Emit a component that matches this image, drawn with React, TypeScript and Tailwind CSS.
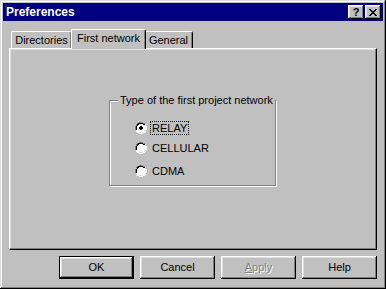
import React from 'react';

const font = "font-['Liberation_Sans',Arial,sans-serif]";

const bevelOut =
  'shadow-[inset_-1px_-1px_#000,inset_1px_1px_#fff,inset_-2px_-2px_#808080,inset_2px_2px_#dfdfdf]';

const TitleButton: React.FC<{ children: React.ReactNode }> = ({ children }) => (
  <div
    className={`w-[16px] h-[14px] bg-[#c0c0c0] ${bevelOut} flex items-center justify-center text-black font-bold text-[11px] leading-none`}
  >
    {children}
  </div>
);

const Radio: React.FC<{ label: string; checked?: boolean; focused?: boolean; className?: string }> = ({
  label,
  checked,
  focused,
  className = '',
}) => (
  <div className={`flex items-center h-[14px] ${className}`}>
    <svg width="12" height="12" viewBox="0 0 12 12" className="shrink-0">
      <path d="M4 0h4v1h2v1h1v2h1v4h-1v2h-1v1h-2v1h-4v-1h-2v-1h-1v-2h-1v-4h1v-2h1v-1h2z" fill="#fff" />
      <path d="M4 0h4v1h2v1h-2v-1h-4v1h-2v2h-1v4h-1v-4h1v-2h1v-1h2z" fill="#808080" />
      <path d="M4 1h4v1h2v1h-2v-1h-4v1h-1v1h-1v4h-1v-4h1v-2h1v-1h1z" fill="#000" />
      <path d="M4 2h4v1h1v1h1v4h-1v1h-1v1h-4v-1h-1v-1h-1v-4h1v-1h1z" fill="#fff" />
      <path d="M10 2h1v2h-1zM10 8h1v1h-1v1h-1v-1h1zM4 10h4v1h-4z" fill="#dfdfdf" />
      {checked && <path d="M5 4h2v1h1v2h-1v1h-2v-1h-1v-2h1z" fill="#000" />}
    </svg>
    <span
      className={`ml-[4px] px-[1px] text-[11px] leading-[12px] text-black ${
        focused ? 'outline outline-1 outline-dotted outline-black' : ''
      }`}
    >
      {label}
    </span>
  </div>
);

const Button: React.FC<{ children: React.ReactNode; isDefault?: boolean }> = ({ children, isDefault }) => (
  <div
    className={`w-[75px] h-[23px] bg-[#c0c0c0] flex items-center justify-center text-[11px] text-black ${
      isDefault ? `border border-black ${bevelOut}` : bevelOut
    }`}
  >
    {children}
  </div>
);

export default function App() {
  return (
    <div
      className={`w-[386px] h-[289px] bg-[#c0c0c0] p-[3px] flex flex-col ${font} shadow-[inset_-1px_-1px_#000,inset_1px_1px_#dfdfdf,inset_-2px_-2px_#808080,inset_2px_2px_#fff]`}
    >
      {/* title bar */}
      <div className="h-[18px] bg-[#000080] flex items-center pl-[3px] pr-[2px] shrink-0">
        <span className="text-white font-bold text-[12px] leading-none">Preferences</span>
        <div className="ml-auto flex">
          <TitleButton>?</TitleButton>
          <div className="w-[1px]" />
          <TitleButton>
            <svg width="8" height="7" viewBox="0 0 8 7">
              <path d="M0 0h2v1h1v1h2v-1h1v-1h2v1h-1v1h-1v1h-1v1h1v1h1v1h1v1h-2v-1h-1v-1h-2v1h-1v1h-2v-1h1v-1h1v-1h1v-1h-1v-1h-1v-1h-1z" fill="#000" />
            </svg>
          </TitleButton>
        </div>
      </div>

      {/* tabs */}
      <div className="px-[6px] mt-[8px] flex flex-col">
        <div className="flex items-end pl-[2px] h-[19px] relative z-10">
          <div className="w-[61px] h-[17px] flex items-center justify-center text-[11px] text-black border-l border-t border-white rounded-tl-[2px] border-r border-r-black rounded-tr-[2px] shadow-[inset_-1px_0_#808080]">
            Directories
          </div>
          <div className="w-[75px] h-[20px] -mb-px -ml-[1px] -mr-[1px] pb-[3px] flex items-center justify-center bg-[#c0c0c0] text-[11px] text-black border-l border-t border-white rounded-tl-[2px] border-r border-r-black rounded-tr-[2px] shadow-[inset_-1px_0_#808080] relative">
            First network
          </div>
          <div className="w-[48px] h-[17px] flex items-center justify-center text-[11px] text-black border-t border-white rounded-tl-[2px] border-r border-r-black rounded-tr-[2px] shadow-[inset_-1px_0_#808080]">
            General
          </div>
        </div>

        {/* panel */}
        <div className="h-[202px] border-l border-t border-white border-r border-b border-r-black border-b-black shadow-[inset_-1px_-1px_#808080,inset_1px_1px_#dfdfdf] flex justify-center pt-[51px]">
          <div className="w-[167px] h-[86px] relative border border-[#808080] shadow-[1px_1px_#fff,inset_1px_1px_#fff] ml-[-1px]">
            <span className="absolute -top-[8px] left-[8px] px-[2px] bg-[#c0c0c0] text-[11px] leading-[14px] text-black">
              Type of the first project network
            </span>
            <div className="flex flex-col pl-[25px] pt-[20px]">
              <Radio label="RELAY" checked focused />
              <Radio label="CELLULAR" className="mt-[6px]" />
              <Radio label="CDMA" className="mt-[9px]" />
            </div>
          </div>
        </div>

        {/* buttons */}
        <div className="flex justify-end gap-[6px] mt-[6px]">
          <Button isDefault>OK</Button>
          <Button>Cancel</Button>
          <Button>
            <span className="text-[#808080] [text-shadow:1px_1px_#fff]">
              <span className="underline">A</span>pply
            </span>
          </Button>
          <Button>Help</Button>
        </div>
      </div>
    </div>
  );
}
